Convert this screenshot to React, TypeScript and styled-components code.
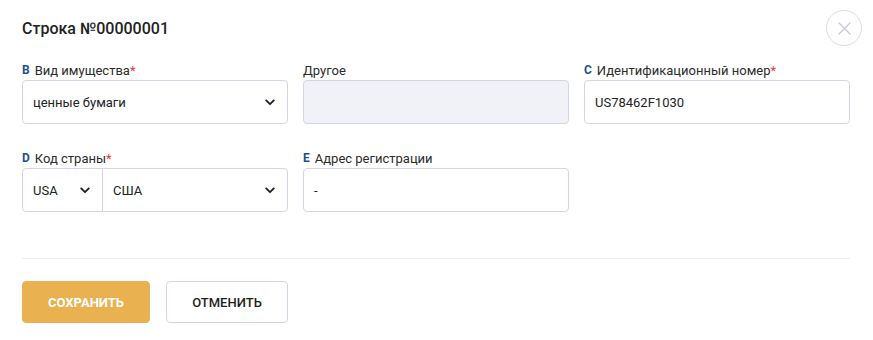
import styled, { createGlobalStyle } from "styled-components";
import { FC } from "react";

const GlobalStyle = createGlobalStyle`
  html, body {
    margin: 0;
    padding: 0;
    background: #ffffff;
    font-family: Roboto, "Liberation Sans", Arial, sans-serif;
    color: #222222;
  }
  * { box-sizing: border-box; }
`;

const Page = styled.div`
  width: 873px;
  height: 340px;
  padding: 10px 23px 0 22px;
  background: #ffffff;
`;

const Header = styled.div`
  display: flex;
  align-items: center;
  justify-content: space-between;
  height: 36px;
  margin-right: -12px;
`;

const Title = styled.h2`
  margin: 0;
  font-size: 16px;
  font-weight: 500;
  color: #222222;
  padding-top: 1px;
`;

const CloseButton = styled.button`
  width: 36px;
  height: 36px;
  border-radius: 50%;
  border: 1px solid #dcd9ea;
  background: #ffffff;
  display: flex;
  align-items: center;
  justify-content: center;
  padding: 0;
  cursor: pointer;
`;

const Grid = styled.div`
  display: grid;
  grid-template-columns: repeat(3, 266px);
  column-gap: 15px;
  row-gap: 26px;
  margin-top: 16px;
`;

const Field = styled.div`
  display: flex;
  flex-direction: column;
`;

const Label = styled.div`
  display: flex;
  align-items: center;
  height: 16px;
  margin-bottom: 2px;
  font-size: 13px;
  color: #2b2b2b;
`;

const Letter = styled.span`
  font-weight: 700;
  color: #1e4f8f;
  font-size: 12px;
  margin-right: 5px;
`;

const Required = styled.span`
  color: #e53935;
`;

const Box = styled.div<{ $disabled?: boolean }>`
  display: flex;
  align-items: center;
  height: 44px;
  border: 1px solid #d6d4e4;
  border-radius: 4px;
  background: ${(p) => (p.$disabled ? "#f0f2f8" : "#ffffff")};
  font-size: 13px;
  color: #222222;
  overflow: hidden;
`;

const Part = styled.div<{ $width?: number; $divider?: boolean }>`
  display: flex;
  align-items: center;
  justify-content: space-between;
  height: 100%;
  padding: 0 12px 0 10px;
  ${(p) => (p.$width ? `width: ${p.$width}px; flex: none;` : "flex: 1;")}
  ${(p) => (p.$divider ? "border-right: 1px solid #d6d4e4;" : "")}
`;

const Divider = styled.div`
  height: 1px;
  background: #ebebf0;
  margin-top: 46px;
`;

const Actions = styled.div`
  display: flex;
  gap: 16px;
  margin-top: 22px;
`;

const Button = styled.button<{ $primary?: boolean }>`
  height: 42px;
  width: ${(p) => (p.$primary ? 128 : 122)}px;
  border-radius: 4px;
  font-family: Roboto, "Liberation Sans", Arial, sans-serif;
  font-size: 13px;
  font-weight: ${(p) => (p.$primary ? 700 : 500)};
  text-transform: uppercase;
  cursor: pointer;
  border: 1px solid ${(p) => (p.$primary ? "#e9b150" : "#d6d4e4")};
  background: ${(p) => (p.$primary ? "#e9b150" : "#ffffff")};
  color: ${(p) => (p.$primary ? "#ffffff" : "#1f1f1f")};
`;

const Chevron: FC = () => (
  <svg width="10" height="7" viewBox="0 0 10 7" fill="none">
    <path d="M1.2 1.4 L5 5.2 L8.8 1.4" stroke="#1f1f1f" strokeWidth="1.8" strokeLinecap="round" strokeLinejoin="round" />
  </svg>
);

const CloseIcon: FC = () => (
  <svg width="13" height="13" viewBox="0 0 13 13" fill="none">
    <path d="M1 1 L12 12 M12 1 L1 12" stroke="#c9c6da" strokeWidth="1.3" strokeLinecap="round" />
  </svg>
);

export default function App() {
  return (
    <>
      <GlobalStyle />
      <Page>
        <Header>
          <Title>Строка №00000001</Title>
          <CloseButton aria-label="Закрыть">
            <CloseIcon />
          </CloseButton>
        </Header>
        <Grid>
          <Field>
            <Label>
              <Letter>B</Letter>Вид имущества<Required>*</Required>
            </Label>
            <Box>
              <Part>
                ценные бумаги
                <Chevron />
              </Part>
            </Box>
          </Field>
          <Field>
            <Label>Другое</Label>
            <Box $disabled />
          </Field>
          <Field>
            <Label>
              <Letter>C</Letter>Идентификационный номер<Required>*</Required>
            </Label>
            <Box>
              <Part>US78462F1030</Part>
            </Box>
          </Field>
          <Field>
            <Label>
              <Letter>D</Letter>Код страны<Required>*</Required>
            </Label>
            <Box>
              <Part $width={80} $divider>
                USA
                <Chevron />
              </Part>
              <Part>
                США
                <Chevron />
              </Part>
            </Box>
          </Field>
          <Field>
            <Label>
              <Letter>E</Letter>Адрес регистрации
            </Label>
            <Box>
              <Part>-</Part>
            </Box>
          </Field>
        </Grid>
        <Divider />
        <Actions>
          <Button $primary>Сохранить</Button>
          <Button>Отменить</Button>
        </Actions>
      </Page>
    </>
  );
}
